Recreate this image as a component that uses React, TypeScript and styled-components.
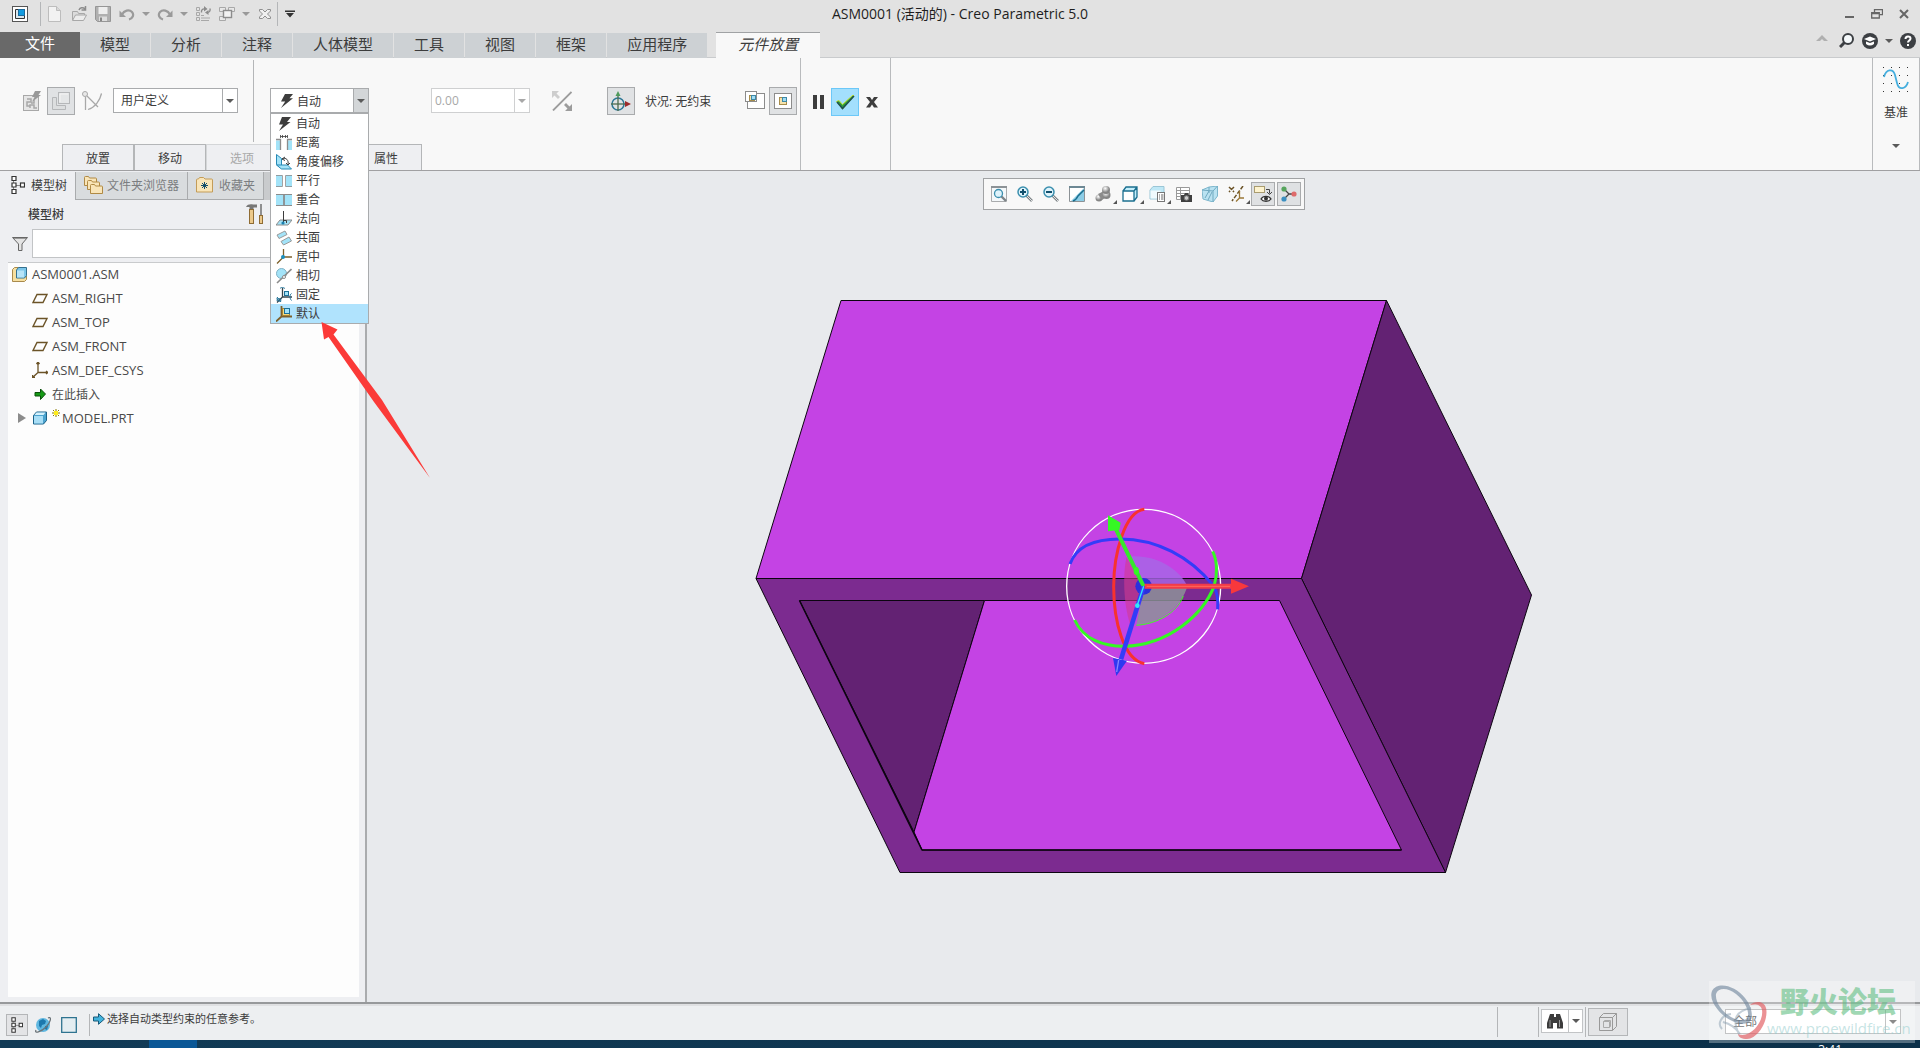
import React from "react";
import styled, { createGlobalStyle } from "styled-components";

const GlobalStyle = createGlobalStyle`
  *, *::before, *::after { box-sizing: border-box; }
  body {
    margin: 0;
    font-family: "Open Sans", "Noto Sans CJK SC", sans-serif;
    font-size: 12px;
    color: #3c3c3c;
    overflow: hidden;
  }
  button, input, select { font: inherit; color: inherit; margin: 0; }
  button { padding: 0; border: 0; background: none; cursor: pointer; }
  ul { list-style: none; margin: 0; padding: 0; }
  svg { display: block; flex: none; }
`;

/* ---------- shell ---------- */

const Shell = styled.div`
  display: flex;
  flex-direction: column;
  height: 100vh;
  background: #e8eaed;
`;

const Divider = styled.span<{ $h?: number; $l?: number; $r?: number }>`
  flex: none;
  width: 1px;
  height: ${(p) => (p.$h ? `${p.$h}px` : "auto")};
  margin-left: ${(p) => p.$l ?? 0}px;
  margin-right: ${(p) => p.$r ?? 0}px;
  background: #b4b6b8;
`;

const Caret = styled.span<{ $c?: string }>`
  width: 0;
  height: 0;
  border: 4px solid transparent;
  border-top-color: ${(p) => p.$c ?? "#5a5a5a"};
  border-bottom: 0;
`;

/* ---------- title bar ---------- */

const TitleBar = styled.header`
  display: grid;
  grid-template-columns: 1fr auto 1fr;
  height: 32px;
  background: #e2e2e2;
`;

const QuickAccess = styled.div`
  display: flex;
  align-items: center;
  height: 28px;
  padding-left: 12px;
`;

const QuickButton = styled.button<{ $w?: number }>`
  display: flex;
  align-items: center;
  justify-content: center;
  width: ${(p) => p.$w ?? 24}px;
  height: 24px;
`;

const Title = styled.h1`
  margin: 0;
  font-size: 14px;
  font-weight: 400;
  line-height: 27px;
  color: #1e1e1e;
`;

const WindowButtons = styled.div`
  display: flex;
  justify-content: flex-end;
  align-items: center;
  height: 28px;
  padding-right: 6px;
  gap: 7px;
`;

const WindowButton = styled.button`
  display: flex;
  align-items: center;
  justify-content: center;
  width: 20px;
  height: 20px;
`;

/* ---------- ribbon tabs ---------- */

const TabStrip = styled.nav`
  display: flex;
  align-items: flex-end;
  gap: 1px;
  height: 26px;
  background: #e2e2e2;
  border-bottom: 1px solid #c9cbcd;
`;

const RibbonTab = styled.button<{ $kind?: "file" | "active" }>`
  height: ${(p) => (p.$kind ? 26 : 25)}px;
  padding: 0 ${(p) => (p.$kind === "file" ? 25 : p.$kind === "active" ? 22 : 20)}px 4px;
  margin: 0 ${(p) => (p.$kind === "file" ? -1 : 0)}px -1px ${(p) => (p.$kind === "active" ? 8 : 0)}px;
  border-top: ${(p) => (p.$kind === "active" ? "1px solid #a0a2a4" : "0")};
  font-size: 15px;
  line-height: 20px;
  font-style: ${(p) => (p.$kind === "active" ? "italic" : "normal")};
  color: ${(p) => (p.$kind === "file" ? "#fff" : "#3c3c3c")};
  background: ${(p) => (p.$kind === "file" ? "#696969" : p.$kind === "active" ? "#f8f8f8" : "#cdd1d4")};
`;

const TabTools = styled.div`
  display: flex;
  align-items: center;
  align-self: center;
  margin-left: auto;
  height: 24px;
  padding-bottom: 8px;
`;

const TabTool = styled.button<{ $w?: number }>`
  display: flex;
  align-items: center;
  justify-content: center;
  width: ${(p) => p.$w ?? 24}px;
  height: 20px;
`;

/* ---------- dashboard ---------- */

const Ribbon = styled.section`
  display: flex;
  flex: none;
  height: 113px;
  background: #f8f8f8;
  border-bottom: 1px solid #a0a0a2;
`;

const Dashboard = styled.div`
  display: flex;
  flex-direction: column;
  border-right: 1px solid #b9bbbd;
`;

const DashRow = styled.div`
  display: flex;
  align-items: center;
  height: 86px;
  padding: 0 3px 1px 18px;
`;

const ToolGroup = styled.div<{ $gap?: number }>`
  display: flex;
  align-items: center;
  gap: ${(p) => p.$gap ?? 0}px;
`;

const ToolButton = styled.button<{ $on?: boolean; $l?: number }>`
  display: flex;
  flex: none;
  align-items: center;
  justify-content: center;
  width: 28px;
  height: 28px;
  margin-left: ${(p) => p.$l ?? 0}px;
  border: 1px solid ${(p) => (p.$on ? "#a9abad" : "transparent")};
  background: ${(p) => (p.$on ? "#e0e2e4" : "transparent")};
`;

const Field = styled.div<{ $w: number; $l?: number; $dim?: boolean }>`
  position: relative;
  display: flex;
  flex: none;
  width: ${(p) => p.$w}px;
  height: 25px;
  margin-left: ${(p) => p.$l ?? 0}px;
  border: 1px solid ${(p) => (p.$dim ? "#cfd0d1" : "#a9abad")};
  background: #fff;
  color: ${(p) => (p.$dim ? "#a8a8a8" : "#3c3c3c")};
`;

const FieldSelect = styled.select`
  flex: 1;
  min-width: 0;
  padding: 0 7px;
  border: 0;
  outline: 0;
  appearance: none;
  background: transparent;
`;

const FieldInput = styled.input`
  flex: 1;
  min-width: 0;
  padding: 0 3px;
  border: 0;
  outline: 0;
  background: transparent;
`;

const FieldArrow = styled.span<{ $fill?: boolean; $dim?: boolean }>`
  display: flex;
  align-items: center;
  justify-content: center;
  width: 15px;
  border-left: 1px solid ${(p) => (p.$dim ? "#cfd0d1" : "#a9abad")};
  background: ${(p) => (p.$fill ? "#d3d6d8" : "transparent")};
  pointer-events: none;
`;

const ComboButton = styled.button`
  display: flex;
  flex: 1;
  align-items: center;
  gap: 3px;
  padding-left: 9px;
`;

const Menu = styled.ul`
  position: absolute;
  z-index: 5;
  top: 24px;
  left: -1px;
  right: -1px;
  border: 1px solid #a9abad;
  background: #fff;
  color: #3c3c3c;
`;

const MenuItem = styled.li<{ $on: boolean }>`
  display: flex;
  align-items: center;
  gap: 4px;
  height: 19px;
  padding-left: 5px;
  line-height: 18px;
  background: ${(p) => (p.$on ? "#b0e3fd" : "transparent")};
`;

const StatusLabel = styled.span`
  min-width: 96px;
  margin-left: 10px;
  white-space: nowrap;
`;

const SlideTabs = styled.div`
  display: flex;
  height: 26px;
  padding-left: 62px;
`;

const SlideTab = styled.button`
  width: 72px;
  border: 1px solid #b4b6b8;
  border-bottom: 0;
  background: #eeeff2;
  &:disabled { color: #a8a8a8; border-color: #d4d6d8; }
`;

const SlideFill = styled.span`
  width: 72px;
  border-top: 1px solid #b4b6b8;
  background: #eeeff2;
`;

const Actions = styled.div`
  display: flex;
  padding: 30px 8px 0 9px;
  gap: 3px;
  border-right: 1px solid #b9bbbd;
`;

const ActionButton = styled.button<{ $on?: boolean; $w: number }>`
  display: flex;
  align-items: center;
  justify-content: center;
  width: ${(p) => p.$w}px;
  height: 28px;
  border: 1px solid ${(p) => (p.$on ? "#6cc8f8" : "transparent")};
  background: ${(p) => (p.$on ? "#a3dffd" : "transparent")};
`;

const DatumButton = styled.button`
  display: flex;
  flex-direction: column;
  align-items: center;
  width: 48px;
  margin-left: auto;
  padding-top: 9px;
  border-left: 1px solid #b9bbbd;
  border-right: 1px solid #b9bbbd;
`;

const DatumLabel = styled.span`
  margin: 10px 0 21px;
  line-height: 20px;
`;

/* ---------- navigator ---------- */

const Work = styled.main`
  display: flex;
  flex: 1;
  min-height: 0;
`;

const Navigator = styled.aside`
  display: flex;
  flex-direction: column;
  width: 367px;
  padding-top: 1px;
  background: #eeeff2;
  border-right: 2px solid #aaacae;
`;

const NavTabs = styled.div`
  display: flex;
  height: 28px;
  background: #c9cbcd;
`;

const NavTab = styled.button<{ $gap: number; $on?: boolean }>`
  display: flex;
  align-items: center;
  gap: ${(p) => p.$gap}px;
  padding: 0 8px 2px ${(p) => (p.$on ? 11 : 8)}px;
  white-space: nowrap;
  color: ${(p) => (p.$on ? "#3c3c3c" : "#7b7d80")};
  background: ${(p) => (p.$on ? "#eeeff2" : "#d9dcde")};
  border-right: 1px solid #a9abad;
  border-bottom: ${(p) => (p.$on ? "0" : "1px solid #a9abad")};
`;

const NavHead = styled.div`
  display: flex;
  align-items: center;
  justify-content: space-between;
  height: 29px;
  padding: 0 101px 2px 28px;
`;

const NavTitle = styled.h2`
  margin: 0;
  font-size: 12px;
  font-weight: 500;
`;

const FilterRow = styled.label`
  display: flex;
  align-items: center;
  gap: 4px;
  height: 29px;
  padding: 0 36px 0 12px;
`;

const FilterInput = styled.input`
  flex: 1;
  height: 29px;
  border: 1px solid #c2c4c6;
  background: #fff;
`;

const Tree = styled.ul`
  flex: 1;
  margin: 4px 6px 5px 8px;
  border-top: 1px solid #c9cbcd;
  background: #fdfdfd;
  font-size: 13px;
`;

const TreeRow = styled.li<{ $root?: boolean }>`
  display: flex;
  align-items: center;
  height: 24px;
  gap: ${(p) => (p.$root ? 5 : 4)}px;
  padding: 0 0 2px ${(p) => (p.$root ? 4 : 7)}px;
  color: #4a4a4a;
`;

const Expander = styled.span`
  display: flex;
  justify-content: center;
  width: 13px;
`;

const TreeLabel = styled.span<{ $cjk?: boolean }>`
  display: flex;
  gap: 2px;
  font-size: ${(p) => (p.$cjk ? 12 : 13)}px;
`;

/* ---------- canvas ---------- */

const Canvas = styled.section`
  position: relative;
  flex: 1;
  min-width: 0;
`;

const Scene = styled.svg`
  width: 100%;
  height: 100%;
`;

const ViewTools = styled.div`
  position: absolute;
  top: 7px;
  left: 50%;
  transform: translateX(-50%);
  display: flex;
  gap: 2px;
  padding: 3px;
  border: 1px solid #a0a2a4;
  background: #f8f8f8;
`;

const ViewButton = styled.button<{ $on?: boolean; $menu?: boolean }>`
  position: relative;
  display: flex;
  align-items: center;
  justify-content: center;
  width: ${(p) => (p.$menu ? 25 : 24)}px;
  height: 24px;
  border: 1px solid ${(p) => (p.$on ? "#a9abad" : "transparent")};
  background: ${(p) => (p.$on ? "#dfe1e3" : "transparent")};
  &::after {
    content: "";
    display: ${(p) => (p.$menu ? "block" : "none")};
    position: absolute;
    right: -2px;
    bottom: 1px;
    border-left: 4px solid transparent;
    border-bottom: 4px solid #555;
  }
`;

const Pointer = styled.svg`
  position: absolute;
  z-index: 8;
  top: 320px;
  left: 318px;
  pointer-events: none;
`;

/* ---------- status bar ---------- */

const StatusBar = styled.footer`
  display: flex;
  flex: none;
  height: 38px;
  border-top: 2px solid #97999b;
  background: #edeff1;
  box-shadow: inset 0 2px 0 #dfe0e2;
`;

const StatusLeft = styled.div`
  display: flex;
  flex: 1;
  align-items: center;
  padding: 6px 0 0 6px;
`;

const StatusToggle = styled.button<{ $w: number; $h: number; $on?: boolean }>`
  display: flex;
  align-items: center;
  justify-content: center;
  width: ${(p) => p.$w}px;
  height: ${(p) => p.$h}px;
  border: 1px solid ${(p) => (p.$on ? "#b4b6b8" : "transparent")};
  background: ${(p) => (p.$on ? "#e3e4e6" : "transparent")};
`;

const Message = styled.output`
  display: flex;
  align-items: center;
  gap: 2px;
  height: 18px;
  margin-bottom: 13px;
  font-size: 11px;
  line-height: 16px;
`;

const StatusRight = styled.div`
  display: flex;
  align-items: flex-start;
  padding: 3px 19px 0 0;
`;

const FindButton = styled.button`
  display: flex;
  width: 42px;
  height: 24px;
  margin: 2px 2px 0;
  border: 1px solid #c2c4c6;
  background: #fff;
`;

const FindPart = styled.span<{ $w: number; $line?: boolean }>`
  display: flex;
  align-items: center;
  justify-content: center;
  width: ${(p) => p.$w}px;
  height: 22px;
  border-left: ${(p) => (p.$line ? "1px solid #c2c4c6" : "0")};
`;

const SelectionTool = styled(StatusToggle)`
  margin: 1px 97px 0 2px;
`;

const FilterSlot = styled.div`
  padding-top: 2px;
`;

const TaskBar = styled.div`
  display: flex;
  flex: none;
  height: 8px;
  padding: 0 78px 0 149px;
  overflow: hidden;
  justify-content: space-between;
  background: linear-gradient(90deg, #123b56, #0b3049);
`;

const TaskActive = styled.span`
  width: 48px;
  background: #0a5796;
`;

const Clock = styled.time`
  padding-top: 2px;
  line-height: 16px;
  color: #fff;
`;

const Watermark = styled.div`
  position: absolute;
  z-index: 9;
  right: 5px;
  bottom: 5px;
  display: flex;
  width: 206px;
  height: 62px;
  overflow: hidden;
  background: rgba(255, 255, 255, 0.3);
  pointer-events: none;
`;

const MarkText = styled.div`
  display: flex;
  flex-direction: column;
  margin-left: -2px;
  white-space: nowrap;
`;

const MarkName = styled.strong`
  padding: 2px 0 0 13px;
  font-family: "Noto Sans CJK SC", sans-serif;
  font-size: 29px;
  font-weight: 900;
  line-height: 34px;
  color: rgba(96, 190, 130, 0.6);
`;

const MarkUrl = styled.span`
  font-size: 15px;
  line-height: 22px;
  color: rgba(150, 205, 205, 0.55);
`;

/* ---------- icons ---------- */

const G = "#a8a8a8";

const Svg = ({ w = 16, h = w, box, children }: { w?: number; h?: number; box?: string; children: React.ReactNode }) => (
  <svg width={w} height={h} viewBox={box ?? `0 0 ${w} ${h}`} fill="none" aria-hidden="true">
    {children}
  </svg>
);

const LogoIcon = () => (
  <Svg>
    <rect x="0.5" y="0.5" width="15" height="15" fill="#fff" stroke="#555" />
    <path d="M3.5 3.5v9h9v-3h-6v-6z" fill="#dbe7ee" stroke="#333" />
    <rect x="6.5" y="3.5" width="6" height="6" fill="#129be0" stroke="#1c6a9c" />
  </Svg>
);
const NewIcon = () => (
  <Svg><path d="M1.5 .5h8l4 4v11h-12z" fill="#f2f2f2" stroke="#bdbdbd" /><path d="M9.500 .5v4h4" fill="#d8d8d8" stroke="#bdbdbd" /></Svg>
);
const OpenIcon = () => (
  <Svg>
    <path d="M1.500 14V5.500h5l1 2h6V9" fill="#dcdcdc" stroke={G} />
    <path d="M1.500 14.500l3-5.500h11l-3 5.500z" fill="#ececec" stroke={G} />
    <path d="M8 4c1-2.500 4-3 6-1M14.500 0v4h-4" stroke="#8c8c8c" strokeWidth="1.500" />
  </Svg>
);
const SaveIcon = () => (
  <Svg><path d="M.5 .5h15v15h-13l-2-2z" fill="#b0b0b0" stroke="#969696" /><path d="M3.500 1h9v7h-9z" fill="#eee" /><path d="M4 10.500h8V15H4z" fill="#ddd" /><path d="M5 11.500h2V15H5z" fill="#888" /></Svg>
);
const UndoIcon = ({ flip }: { flip?: boolean }) => (
  <Svg>
    <g transform={flip ? "matrix(-1 0 0 1 16 0)" : undefined}>
      <path d="M3 8.500C5 4.500 10 3 13 6c2.500 3 .5 6.500-3 7.500" stroke="#9a9a9a" strokeWidth="2.200" />
      <path d="M.5 4.500v6.500h6.500z" fill="#9a9a9a" />
    </g>
  </Svg>
);
const RegenIcon = () => (
  <Svg>
    <path d="M1.500 1.500h3v3h-3zM1.500 6.500h3v3h-3zM1.500 11.500h3v3h-3zM6 9.500h3M6 12h9M6 14.500h8" stroke={G} />
    <path d="M6.500 6.500C6 3.500 8 2.500 10 3" stroke="#8c8c8c" strokeWidth="1.400" />
    <path d="M9 0l3.500 3L9 5.500zM13.500 9L10 6.500 13.500 4z" fill="#8c8c8c" />
    <path d="M15 2.500c.5 3-1 4-3 4" stroke="#8c8c8c" strokeWidth="1.400" />
  </Svg>
);
const WindowsIcon = () => (
  <Svg><path d="M.5 1.500h6v4h-6zM9.500 1.500h6v4h-6zM.5 10.500h6v4h-6z" fill="#e8e8e8" stroke={G} /><rect x="4.500" y="4.500" width="8" height="7" fill="#f2f2f2" stroke="#8c8c8c" strokeWidth="1.400" /></Svg>
);
const CloseGlyph = () => (
  <Svg w={12}><path d="M.5 1.500h3l2.500 2.500 2.500-2.500h3v1.500L8.500 6l3 3v1.500h-3L6 8l-2.500 2.500h-3V9l3-3-3-3z" fill="#f0f0f0" stroke="#8f8f8f" /></Svg>
);
const CustomizeIcon = () => (
  <Svg w={10} h={8}><path d="M0 .500h10v1.500H0zM1 3h8L5 7.500z" fill="#333" /></Svg>
);

const Bolt = () => (
  <Svg w={14}><path d="M5 0h8L9.500 4.200h3.500L1 14l4.200-6.500H1z" fill="#3d3d3d" /></Svg>
);
const InterfaceIcon = () => (
  <Svg w={20}>
    <rect x="1.500" y="4.500" width="15" height="15" fill="#e6e6e6" stroke={G} />
    <path d="M5 8h4v3H5v4h3M12 9v3h-3M8 17v-3h4v3h3" stroke="#a8a8a8" strokeWidth="1.500" />
    <path d="M13 0h6l-2.500 4H19l-9 7 2.500-5H10z" fill="#999" />
  </Svg>
);
const ManualIcon = () => (
  <Svg w={18}><path d="M.5 5.500h4v8h9v4H.5z" fill="#dcdedf" stroke="#b5b7b9" /><rect x="6.500" y=".5" width="11" height="11" fill="#e4e6e7" stroke="#b5b7b9" /><path d="M8 10V2h8" stroke="#f4f4f4" /></Svg>
);
const DragIcon = () => (
  <Svg w={20}><path d="M3 3l13 13M3.500 6v13M6 18.500c7-2 12-9 13.500-16" stroke="#a8a8a8" strokeWidth="1.300" /><circle cx="3" cy="3" r="2.500" fill="#e8e8e8" stroke={G} /></Svg>
);
const FlipIcon = () => (
  <Svg w={20}><path d="M1 19.500L19.500 1" stroke="#9c9c9c" strokeWidth="1.800" /><path d="M0 0h7L4.500 2.500 8 6 6 8 2.500 4.500 0 7z" fill="#cdcdcd" /><path d="M20 20h-7l2.500-2.500L12 14l2-2 3.500 3.500L20 13z" fill="#9c9c9c" /></Svg>
);
const DraggerIcon = () => (
  <Svg w={20}>
    <circle cx="7" cy="13" r="6" stroke="#2c7796" strokeWidth="1.500" />
    <path d="M7 4v16" stroke="#4c6b4e" strokeWidth="1.300" /><path d="M0 13h15" stroke="#4c6b4e" strokeWidth="1.300" />
    <path d="M4.500 5L7 0l2.500 5z" fill="#4f9a5b" /><path d="M14 10l6 3-6 3z" fill="#9d2b2b" />
  </Svg>
);
const WindowPairIcon = () => (
  <Svg w={20}>
    <rect x="2.500" y="2.500" width="17" height="15" fill="#fff" stroke="#8c8c8c" />
    <rect x=".5" y=".5" width="11" height="10" fill="#fff" stroke="#8c8c8c" />
    <rect x="4.500" y="4.500" width="5" height="5" fill="#f6e3ad" stroke="#a78d4b" /><rect x="6.500" y="4.500" width="4" height="4" fill="#9fdcf5" stroke="#3f88a5" />
  </Svg>
);
const WindowOneIcon = () => (
  <Svg w={18} h={16}>
    <rect x=".5" y=".5" width="17" height="15" fill="#fff" stroke="#8c8c8c" />
    <rect x="5.500" y="4.500" width="7" height="7" fill="#f6e3ad" stroke="#a78d4b" /><rect x="8.500" y="4.500" width="4" height="4" fill="#9fdcf5" stroke="#3f88a5" />
  </Svg>
);
const DatumIcon = () => (
  <Svg w={26}>
    {[0, 8, 16, 24].map((x) => [0, 8, 16, 24].map((y) => <rect key={`${x}-${y}`} x={x} y={y} width="1" height="1" fill="#333" />))}
    <path d="M1 10C3 2 10 1 12 8l2 8c2 8 9 6 11-1" stroke="#45aede" strokeWidth="1.800" />
  </Svg>
);

const paneFill = "#a3e3f8";
const constraintIcons: Record<string, React.ReactNode> = {
  auto: <Svg><path d="M6 1h9l-4 5h3.500L3 15l4-6.500H3z" fill="#3d3d3d" /></Svg>,
  distance: <Svg><path d="M0 5.500h5V15H0M16 5.500h-5V15h5" fill={paneFill} /><path d="M0 4.500h4.500V15M16 4.500h-4.500V15" stroke="#8c8c8c" strokeWidth="1.300" /><path d="M4.500 1.500h7M4.500 0v3M11.500 0v3M6.500 0v3M9.500 0v3" stroke="#3d3d3d" strokeWidth=".8" /></Svg>,
  angle: <Svg><path d="M.5 .5v10l5 4V4.500z" fill={paneFill} stroke="#2789b5" /><path d="M.5 11l5 4h10l-4-4z" fill={paneFill} stroke="#2789b5" /><path d="M6 5c4-2 7 1 6 6M9 3L6 5l3 1.500M10 9l2 2 2-2" stroke="#3d3d3d" /></Svg>,
  parallel: <Svg><path d="M0 2h6v12H0zM10 2h6v12h-6z" fill={paneFill} /><path d="M0 2.500h6.500v11H0M16 2.500H9.500v11H16" stroke="#8c8c8c" strokeWidth=".8" /></Svg>,
  coincident: <Svg><path d="M0 3h16v10H0z" fill={paneFill} /><path d="M0 2.500h16M0 13.500h16" stroke="#8c8c8c" /><path d="M8 3v10" stroke="#8c8c8c" strokeWidth="1.800" /></Svg>,
  normal: <Svg><path d="M0 14l4-5h12l-4 5z" fill={paneFill} stroke="#8c8c8c" /><path d="M7.500 0v12M7.500 9.500h3V12" stroke="#3d3d3d" /><circle cx="7" cy="12" r="1.600" fill="#1b7fae" /></Svg>,
  coplanar: <Svg><path d="M1 5l8-4 2 3.500-8 4zM5 11.500l8-4.500 2.500 4-8 4z" fill={paneFill} stroke="#9a9a9a" /></Svg>,
  centered: <Svg><path d="M7.500 0v8L1 14.500M7.500 8H16" stroke="#7d602b" strokeWidth="1.300" /><circle cx="7" cy="8" r="2" fill="#1b8fc0" /></Svg>,
  tangent: <Svg><circle cx="5.500" cy="5.500" r="5" fill={paneFill} stroke="#7fb1c4" /><path d="M1 15L15.500 1" stroke="#8c8c8c" strokeWidth="1.600" /><circle cx="8" cy="9" r="1.500" fill="#fff" stroke="#8c8c8c" /></Svg>,
  fix: <Svg><path d="M6.500 1v9L1 15.500M6.500 10H16" stroke="#34444c" strokeWidth="1.300" /><rect x="8.500" y="4.500" width="4" height="4" fill={paneFill} stroke="#1b6f96" /><path d="M4 1.500c2-2 3-1 5 0M15.500 6.500c-2 1-2 5 0 7M1 10l4 5M1 14c0-3 4-3 4-1s-4 2-4-2" stroke="#1b6f96" /></Svg>,
  default: <Svg><path d="M5.500 0v10.500L0 15.500M5.500 10.500H16" stroke="#7d602b" strokeWidth="1.800" /><rect x="6.500" y="2.500" width="7" height="7" fill="#f4d97f" stroke="#a78432" /><rect x="8.500" y="2.500" width="5" height="5" fill={paneFill} stroke="#1b6f96" /></Svg>,
};

const TreeNavIcon = ({ s = 14 }: { s?: number }) => (
  <Svg w={s} h={s + 4} box="0 0 14 18"><path d="M2.500 5v9M5 9.500h5" stroke="#888" /><path d="M1 1h4v4H1zM1 7.500h4v4H1zM1 14h4v4H1z" fill="#fff" stroke="#333" strokeWidth="1.200" transform="translate(0 -.5)" /><rect x="9.500" y="7" width="4" height="4" fill="#fff" stroke="#333" strokeWidth="1.200" /></Svg>
);
const FoldersIcon = () => (
  <Svg w={19} h={18}>{[[0, 0], [3, 4], [6, 8]].map(([x, y]) => <path key={x} transform={`translate(${x} ${y})`} d="M.5 1.500Q.5 .5 1.500 .5h3l1 1.500h6q1 0 1 1v6.500H.5z" fill="#f9e5b8" stroke="#b08a45" />)}</Svg>
);
const FavoriteIcon = () => (
  <Svg w={17} h={16}><path d="M.5 3q0-1 1-1h1l1-1.500h4L9 2h6.500q1 0 1 1v12H.5z" fill="#f9e5b8" stroke="#c39c58" /><path d="M8.500 5v7M5 8.500h7M6 6l5 5M11 6l-5 5" stroke="#134f6c" /></Svg>
);
const HammerIcon = () => (
  <Svg w={18} h={20}>
    <path d="M0 3c1-3 5-3 7-2.500h4v3H7.500v2h-4V3z" fill="#777" /><rect x="3.500" y="5.500" width="4" height="14" fill="#ecc98b" stroke="#8f6c34" />
    <path d="M15 0v11" stroke="#777" strokeWidth="1.600" /><rect x="13.500" y="11.500" width="3" height="8" fill="#ecc98b" stroke="#8f6c34" />
  </Svg>
);
const FunnelIcon = () => (
  <Svg><path d="M.5 1.500h15L10 8v6.500l-3.500 0V8z" fill="#e4e4e4" stroke="#666" /><path d="M2 2.500h12" stroke="#999" /></Svg>
);
const PlaneIcon = () => (<Svg><path d="M1 12.500L5 4.500h10l-4 8z" stroke="#6b5327" strokeWidth="1.400" /></Svg>);
const CsysIcon = () => (<Svg><path d="M6 0v10.500H16M6 10.500L.5 15.500M4.500 2L6 0l1.500 2M14 9l2 1.500-2 1.500M.5 13v2.500H3" stroke="#6b5327" strokeWidth="1.300" /></Svg>);
const InsertIcon = () => (<Svg><path d="M3 6.500h5.500V3l5 5-5 5.500V10H3z" fill="#169a16" stroke="#0b4f0b" /></Svg>);
const AsmIcon = () => (
  <Svg w={15}><path d="M.5 2.500l2-2h4v8h8v4l-2 2H.5z" fill="#f6dfa0" stroke="#a98a4c" /><path d="M4.500 3l2-2.500h8v8l-2 2.500h-8z" fill="#7cc6ea" stroke="#34708e" /><path d="M5 3.500h7v7H5z" fill="#b7e4f8" /></Svg>
);
const PartIcon = () => (
  <Svg><path d="M1.500 5.500l3-3.500h10v8.500l-3 3.500h-10z" fill="#4ba3cf" stroke="#1b6187" /><path d="M2 6h9v7.500H2z" fill="#a8def6" /><path d="M2.500 5l2-2.500h9l-2 2.500z" fill="#d5f1fc" /></Svg>
);
const StarMark = () => (<Svg w={8} h={10}><path d="M4 0v8M0 4h8M1 1l6 6M7 1L1 7" stroke="#8a7a00" /><rect x="2" y="2" width="4" height="4" fill="#ffec1a" /></Svg>);

const Lens = ({ mark }: { mark?: string }) => (
  <Svg><path d="M9.500 9.500L15 15" stroke="#7d8488" strokeWidth="2.600" /><path d="M10 10l5 5" stroke="#e3e3e3" /><circle cx="6" cy="6" r="5" fill="#dff3fb" stroke="#3b8fae" strokeWidth="1.500" />{mark && <path d={mark} stroke="#114f6d" strokeWidth="2" />}</Svg>
);
const Cube = ({ c = "#1b6f8f", f = "#fff", t = "#c4eefb" }) => (
  <><path d="M1 5l3-4h11v10l-3 4H1z" fill={f} /><path d="M1 5l3-4h11l-3 4z" fill={t} /><path d="M12 5l3-4v10l-3 4z" fill={t} /><path d="M1 5h11v10H1zM1 5l3-4h11v10l-3 4M12 5l3-4" stroke={c} strokeWidth="1.300" /></>
);

const viewTools: { name: string; menu?: boolean; on?: boolean; icon: React.ReactNode }[] = [
  { name: "重新调整", icon: <Svg><path d="M.5 .5h15v15H.5z" fill="#f4f8fa" stroke="#a9abad" /><path d="M0 1h16" stroke="#8c9296" strokeWidth="2" /><path d="M10 10l5 5" stroke="#7d8488" strokeWidth="2.400" /><circle cx="7.500" cy="7.500" r="4" fill="#dff3fb" stroke="#3b8fae" strokeWidth="1.300" /></Svg> },
  { name: "放大", icon: <Lens mark="M6 3v6M3 6h6" /> },
  { name: "缩小", icon: <Lens mark="M3 6h6" /> },
  { name: "重画", icon: <Svg><path d="M.5 .5h15v15H.5z" fill="#fff" stroke="#8c9296" /><path d="M15 2v13H2z" fill="#8dcde6" /><path d="M0 1h16" stroke="#6d8894" strokeWidth="2" /><path d="M4 15c3-1 4-3 5-5l6-6" stroke="#1b6f8f" strokeWidth="1.500" /></Svg> },
  { name: "着色", menu: true, icon: <Svg><defs><radialGradient id="ball" cx=".4" cy=".3"><stop stopColor="#fff" /><stop offset="1" stopColor="#858585" /></radialGradient></defs><circle cx="4" cy="12" r="3.500" fill="url(#ball)" /><path d="M3 8l6-3 4 5-6 4z" fill="#8c8c8c" /><circle cx="11.500" cy="9" r="4" fill="url(#ball)" /><circle cx="11" cy="4" r="4" fill="url(#ball)" /></Svg> },
  { name: "显示样式", menu: true, icon: <Svg><Cube /></Svg> },
  { name: "已保存方向", menu: true, icon: <Svg><path d="M1 4l3-3.500h11V9l-3 4H1z" fill="#bfe8f6" stroke="#9bc6d6" /><path d="M1.500 4.500h10v8h-10z" fill="#f0fafd" /><rect x="8.500" y="6.500" width="7" height="9" fill="#fff" stroke="#777" /><path d="M10 9h1M12 9h2.500M10 11h1M12 11h2.500M10 13h1M12 13h2.500" stroke="#666" /></Svg> },
  { name: "视图管理器", icon: <Svg><path d="M.5 1.500h13v12H.5zM.5 4.500h13M.5 7.500h13M.5 10.500h13M4.500 1.500v12" fill="#fff" stroke="#999" /><path d="M5 9h3l1-2h3l1 2h3v7H5z" fill="#3f3f3f" /><circle cx="10.500" cy="12" r="2.300" fill="#ccc" stroke="#777" /></Svg> },
  { name: "透视图", icon: <Svg><path d="M0 4l7-3 8.500-1v10L11 16 1 13z" fill="#b9e2f1" stroke="#7db6cc" /><path d="M0 4l11 1v11M11 5l4.500-5M3 12l4-7M6 14l4-8M7 1v6" stroke="#6fa9c0" /></Svg> },
  { name: "基准显示", menu: true, icon: <Svg><path d="M1 1l5 5M6 1L1 6M15 0L4 15" stroke="#6b5327" strokeWidth="1.500" strokeDasharray="4 1.500" /><path d="M11.500 5v7H16M11.500 12L8 15.500" stroke="#9a7736" strokeWidth="1.300" /></Svg> },
  { name: "注释显示", on: true, icon: <Svg w={18}><rect x=".5" y="1.500" width="10" height="6" fill="#fdf3cf" stroke="#a99c70" /><path d="M12 4.500h3.500v4M13 7l2.500 2.500L18 7" stroke="#444" /><path d="M7 14c2-3.500 8-3.500 10 0-2 3-8 3-10 0z" fill="#fff" stroke="#333" strokeWidth="1.300" /><circle cx="12" cy="13.500" r="2" fill="#333" /></Svg> },
  { name: "旋转中心", on: true, icon: <Svg><path d="M3 3l5 5-5 5M8 8h5" stroke="#444" strokeWidth="1.300" /><circle cx="3" cy="3" r="2.600" fill="#56a45c" /><circle cx="13" cy="8" r="2.600" fill="#de6a6a" /><circle cx="3" cy="13" r="2.600" fill="#3c8fc0" /></Svg> },
];

const constraints: [string, string][] = [
  ["auto", "自动"], ["distance", "距离"], ["angle", "角度偏移"], ["parallel", "平行"],
  ["coincident", "重合"], ["normal", "法向"], ["coplanar", "共面"], ["centered", "居中"],
  ["tangent", "相切"], ["fix", "固定"], ["default", "默认"],
];

const treeItems: { label: string; icon: React.ReactNode; open?: boolean; cjk?: boolean }[] = [
  { label: "ASM_RIGHT", icon: <PlaneIcon /> },
  { label: "ASM_TOP", icon: <PlaneIcon /> },
  { label: "ASM_FRONT", icon: <PlaneIcon /> },
  { label: "ASM_DEF_CSYS", icon: <CsysIcon /> },
  { label: "在此插入", icon: <InsertIcon />, cjk: true },
  { label: "MODEL.PRT", icon: <PartIcon />, open: true },
];

/* ---------- model ---------- */

const Model = () => (
  <Scene viewBox="367 171 1553 831" role="img" aria-label="MODEL.PRT">
    <g stroke="#0c0410" strokeWidth="1" strokeLinejoin="round">
      <path d="M841 300.500H1386.500L1301.500 578.500H756z" fill="#c443e4" />
      <path d="M1386.500 300.500L1531.500 595 1445.500 872.500 1301.500 578.500z" fill="#632273" />
      <path d="M756 578.500H1301.500L1445.500 872.500H900z" fill="#7c2b90" />
      <path d="M799.500 600.500H984.500L914 832z" fill="#632273" />
      <path d="M984.500 600.500H1279.500L1401.500 850H922L914 832z" fill="#c443e4" />
      <path d="M799.500 600.500L922 850H1401.500" fill="none" strokeWidth="1.600" />
    </g>
    <g transform="translate(1040 490) scale(.33333)" fill="none">
      <circle cx="311" cy="289" r="231" stroke="#fff" strokeWidth="4" />
      <path d="M260 200C350 190 420 240 442 289H311z" fill="#a668e6" fillOpacity=".8" />
      <path d="M442 289C425 350 360 402 289 406L311 289z" fill="#8d9299" fillOpacity=".85" />
      <path d="M260 200C248 250 250 340 270 402L289 370 311 289z" fill="#d23a93" fillOpacity=".6" />
      <path d="M430 318C410 370 350 402 289 406" stroke="#3dff20" strokeWidth="3" />
      <path d="M313 58C255 64 221 190 221 290S250 510 313 521" stroke="#f8322e" strokeWidth="9" />
      <path d="M90 222C112 160 180 147 240 147 350 147 450 200 520 287 532 305 535 330 533 358" stroke="#343cf8" strokeWidth="9" />
      <path d="M104 390C130 448 190 469 252 469 390 465 490 370 522 289 534 250 531 210 518 184" stroke="#35f824" strokeWidth="9" />
      <circle cx="311" cy="289" r="25" fill="#2c30dc" />
      <path d="M311 289L228 118" stroke="#35e82c" strokeWidth="12" />
      <path d="M204 76L242 98 238 120 204 124z" fill="#35f824" />
      <ellipse cx="289" cy="243" rx="8" ry="12" fill="#35f824" />
      <path d="M311 289L243 508" stroke="#343cf8" strokeWidth="14" />
      <path d="M219 504l42 8-32 46z" fill="#2f38f0" /><path d="M236 510l-6 36" stroke="#8387ff" strokeWidth="4" />
      <path d="M311 289L292 345" stroke="#30e8f8" strokeWidth="4" /><circle cx="292" cy="347" r="7" fill="#30e8f8" />
      <path d="M314 289H574" stroke="#f23b48" strokeWidth="15" /><path d="M320 289H570" stroke="#ff6a5c" strokeWidth="3" />
      <path d="M573 266l54 23-54 22z" fill="#f8383c" />
    </g>
  </Scene>
);

export default function App() {
  return (
    <Shell>
      <GlobalStyle />
      <TitleBar>
        <QuickAccess>
          <LogoIcon />
          <Divider $h={24} $l={12} $r={2} />
          <QuickButton aria-label="新建"><NewIcon /></QuickButton>
          <QuickButton aria-label="打开"><OpenIcon /></QuickButton>
          <QuickButton aria-label="保存"><SaveIcon /></QuickButton>
          <QuickButton aria-label="撤消"><UndoIcon /></QuickButton>
          <QuickButton $w={14} aria-label="撤消列表"><Caret $c="#999" /></QuickButton>
          <QuickButton aria-label="重做"><UndoIcon flip /></QuickButton>
          <QuickButton $w={14} aria-label="重做列表"><Caret $c="#999" /></QuickButton>
          <QuickButton aria-label="重新生成"><RegenIcon /></QuickButton>
          <QuickButton aria-label="窗口"><WindowsIcon /></QuickButton>
          <QuickButton $w={14} aria-label="窗口列表"><Caret $c="#999" /></QuickButton>
          <QuickButton aria-label="关闭窗口"><CloseGlyph /></QuickButton>
          <Divider $h={24} />
          <QuickButton aria-label="自定义快速访问工具栏"><CustomizeIcon /></QuickButton>
        </QuickAccess>
        <Title>ASM0001 (活动的) - Creo Parametric 5.0</Title>
        <WindowButtons>
          <WindowButton aria-label="最小化"><Svg w={10}><path d="M0 8h9" stroke="#666" strokeWidth="2" /></Svg></WindowButton>
          <WindowButton aria-label="还原"><Svg w={12} h={10}><path d="M3.500 3V.700h8v5H9M.7 3.700h7.600V9H.7zM.7 4.500h7.600" stroke="#666" strokeWidth="1.300" /></Svg></WindowButton>
          <WindowButton aria-label="关闭"><Svg w={10}><path d="M1 1l8 8M9 1L1 9" stroke="#666" strokeWidth="2" /></Svg></WindowButton>
        </WindowButtons>
      </TitleBar>

      <TabStrip>
        <RibbonTab $kind="file">文件</RibbonTab>
        {["模型", "分析", "注释", "人体模型", "工具", "视图", "框架", "应用程序"].map((t) => (
          <RibbonTab key={t}>{t}</RibbonTab>
        ))}
        <RibbonTab $kind="active">元件放置</RibbonTab>
        <TabTools>
          <TabTool aria-label="最小化功能区"><Svg w={12} h={12}><path d="M6 0l6 6H8L6 4 4 6H0z" fill="#b0b0b0" /></Svg></TabTool>
          <TabTool aria-label="搜索"><Svg w={15}><path d="M6 9L1 14" stroke="#3c3f43" strokeWidth="3" /><circle cx="9" cy="6" r="5" fill="#f5f9fb" stroke="#3c3f43" strokeWidth="2" /></Svg></TabTool>
          <TabTool aria-label="学习"><Svg><circle cx="8" cy="8" r="8" fill="#3c3f43" /><path d="M8 3.500l6 2.500-6 2.500L2 6z" fill="#fff" /><path d="M4 8.500l4 1.500 4-1.500v2.500q-4 3-8 0z" fill="#fff" /></Svg></TabTool>
          <TabTool $w={14} aria-label="学习列表"><Caret /></TabTool>
          <TabTool aria-label="帮助"><Svg><circle cx="8" cy="8" r="8" fill="#3c3f43" /><path d="M5.500 6c0-3.500 5-3.300 5-.5 0 2-2.500 2-2.500 4M8 11v2" stroke="#fff" strokeWidth="2" /></Svg></TabTool>
        </TabTools>
      </TabStrip>

      <Ribbon>
        <Dashboard>
          <DashRow>
            <ToolGroup $gap={1}>
              <ToolButton aria-label="使用界面放置"><InterfaceIcon /></ToolButton>
              <ToolButton $on aria-label="手动放置"><ManualIcon /></ToolButton>
              <ToolButton $l={2} aria-label="约束转换"><DragIcon /></ToolButton>
            </ToolGroup>
            <Field $w={125} $l={7}>
              <FieldSelect aria-label="连接类型"><option>用户定义</option></FieldSelect>
              <FieldArrow><Caret /></FieldArrow>
            </Field>
            <Divider $h={82} $l={15} $r={16} />
            <Field $w={99}>
              <ComboButton aria-haspopup="listbox" aria-expanded="true"><Bolt />自动</ComboButton>
              <FieldArrow $fill><Caret /></FieldArrow>
              <Menu role="listbox" aria-label="约束类型">
                {constraints.map(([id, label]) => (
                  <MenuItem key={id} role="option" aria-selected={id === "default"} $on={id === "default"}>
                    {constraintIcons[id]}
                    {label}
                  </MenuItem>
                ))}
              </Menu>
            </Field>
            <Field $w={99} $l={62} $dim>
              <FieldInput aria-label="偏移" defaultValue="0.00" disabled />
              <FieldArrow $dim><Caret $c="#a8a8a8" /></FieldArrow>
            </Field>
            <ToolButton $l={18} aria-label="反向"><FlipIcon /></ToolButton>
            <ToolButton $on $l={31} aria-label="3D 拖动器"><DraggerIcon /></ToolButton>
            <StatusLabel>状况: 无约束</StatusLabel>
            <ToolButton aria-label="单独窗口"><WindowPairIcon /></ToolButton>
            <ToolButton $on aria-label="主窗口"><WindowOneIcon /></ToolButton>
          </DashRow>
          <SlideTabs>
            <SlideTab>放置</SlideTab>
            <SlideTab>移动</SlideTab>
            <SlideTab disabled>选项</SlideTab>
            <SlideFill />
            <SlideTab>属性</SlideTab>
          </SlideTabs>
        </Dashboard>
        <Actions>
          <ActionButton $w={18} aria-label="暂停"><Svg w={12} h={14}><path d="M0 0h4v14H0zM7 0h4v14H7z" fill="#3d3d3d" /></Svg></ActionButton>
          <ActionButton $w={28} $on aria-label="确定"><Svg w={20}><path d="M1.500 9.500l2.500-1 3.500 4L18 3l1 1L7.500 17z" fill="#2f9e3c" stroke="#c5e02a" /><path d="M2 10l5.500 6.500L19 4" stroke="#1d4f52" strokeWidth="1.500" /></Svg></ActionButton>
          <ActionButton $w={20} aria-label="取消"><Svg w={12}><path d="M0 1h4l2 3 2-3h4L8 6l4 5.500H8L6 8.500 4 11.500H0L4 6z" fill="#3d3d3d" /></Svg></ActionButton>
        </Actions>
        <DatumButton>
          <DatumIcon />
          <DatumLabel>基准</DatumLabel>
          <Caret />
        </DatumButton>
      </Ribbon>

      <Work>
        <Navigator>
          <NavTabs>
            <NavTab $gap={6} $on><TreeNavIcon />模型树</NavTab>
            <NavTab $gap={4}><FoldersIcon />文件夹浏览器</NavTab>
            <NavTab $gap={6}><FavoriteIcon />收藏夹</NavTab>
          </NavTabs>
          <NavHead>
            <NavTitle>模型树</NavTitle>
            <button aria-label="设置"><HammerIcon /></button>
          </NavHead>
          <FilterRow>
            <FunnelIcon />
            <FilterInput aria-label="过滤" />
          </FilterRow>
          <Tree>
            <TreeRow $root><AsmIcon /><TreeLabel>ASM0001.ASM</TreeLabel></TreeRow>
            {treeItems.map((it) => (
              <TreeRow key={it.label}>
                <Expander>{it.open && <Svg w={8} h={10}><path d="M0 0l8 5-8 5z" fill="#8c8c8c" /></Svg>}</Expander>
                {it.icon}
                <TreeLabel $cjk={it.cjk}>{it.open && <StarMark />}{it.label}</TreeLabel>
              </TreeRow>
            ))}
          </Tree>
        </Navigator>
        <Canvas>
          <Model />
          <ViewTools role="toolbar" aria-label="图形工具栏">
            {viewTools.map((t) => (
              <ViewButton key={t.name} aria-label={t.name} $menu={t.menu} $on={t.on}>{t.icon}</ViewButton>
            ))}
          </ViewTools>
        </Canvas>
      </Work>

      <StatusBar>
        <StatusLeft>
          <StatusToggle $w={22} $h={22} $on aria-label="导航器"><TreeNavIcon s={12} /></StatusToggle>
          <StatusToggle $w={30} $h={22} aria-label="浏览器"><Svg><circle cx="8" cy="8" r="7" fill="#5fb7e0" /><path d="M4 4l4-2 3 2-1 3-3 1-1 3-2-2zM10 9l3 0-1 4-2-1z" fill="#1d78ad" /><path d="M1 13c-2 4 5 2 10-3s6-11 2-9" stroke="#6b7479" strokeWidth="1.300" /></Svg></StatusToggle>
          <StatusToggle $w={22} $h={22} aria-label="全屏"><Svg><path d="M.7 .7h14.600v14.600H.7z" fill="#e3edf1" stroke="#2e7390" strokeWidth="1.300" /></Svg></StatusToggle>
          <Divider $h={22} $l={9} $r={3} />
          <Message><Svg w={12} h={12}><path d="M.5 4h5V.700L11.500 6l-6 5.300V8h-5z" fill="#43b3dc" stroke="#15597a" /></Svg>选择自动类型约束的任意参考。</Message>
        </StatusLeft>
        <StatusRight>
          <Divider $h={30} $r={40} />
          <Divider $h={30} />
          <FindButton aria-label="查找">
            <FindPart $w={26}><Svg w={16} h={15}><path d="M3 0h4v3h2V0h4l3 9v5.500h-6V9H6v5.500H0V9z" fill="#3c3c3c" /><path d="M3 6v7M12.500 6v7" stroke="#999" /></Svg></FindPart>
            <FindPart $w={14} $line><Caret /></FindPart>
          </FindButton>
          <Divider $h={30} />
          <SelectionTool $w={40} $h={28} $on aria-label="选择缓冲器"><Svg w={18}><path d="M.5 4.500l4-4h13v13l-4 4H.5zM.5 4.500h13v13M13.500 4.500l4-4" stroke="#999" /><path d="M4.500 8.500h6v6h-6zM4.500 8.500l1-1h6v6l-1 1" stroke="#aaa" /></Svg></SelectionTool>
          <FilterSlot>
            <Field $w={176}>
              <FieldSelect aria-label="选择过滤器"><option>全部</option></FieldSelect>
              <FieldArrow><Caret /></FieldArrow>
            </Field>
          </FilterSlot>
        </StatusRight>
      </StatusBar>
      <TaskBar>
        <TaskActive />
        <Clock>3:41</Clock>
      </TaskBar>

      <Pointer width="116" height="162" viewBox="318 320 116 162" aria-hidden="true">
        <path d="M321.500 322L337.500 329.500 333.500 334.500 382 400 430 478 374 402 328.500 337 324 339.500z" fill="#fb3a38" />
      </Pointer>

      <Watermark>
        <Svg w={60} h={62}>
          <path fillRule="evenodd" d="M3 10C8 0 26 4 36 17c8 10 9 22 3 25-8 3-22-3-30-13C3 22 1 15 3 10zm4 3c-1 8 6 18 15 23s16 4 17-1-3-15-12-22S9 7 7 13z" fill="#6b8299" fillOpacity=".6" />
          <path fillRule="evenodd" d="M41 24c4-4 14-5 16 3 3 12-8 31-19 31-5 0-9-2-9-5 12 5 26-12 24-24-1-6-7-6-12-5z" fill="#e0575c" fillOpacity=".65" />
          <path d="M22 33c-10 1-14 10-9 15M42 27c-14 3-20 10-12 26M14 41c8 2 13 6 17 12" stroke="#8aa0b2" strokeOpacity=".5" strokeWidth="2" />
        </Svg>
        <MarkText>
          <MarkName>野火论坛</MarkName>
          <MarkUrl>www.proewildfire.cn</MarkUrl>
        </MarkText>
      </Watermark>
    </Shell>
  );
}
